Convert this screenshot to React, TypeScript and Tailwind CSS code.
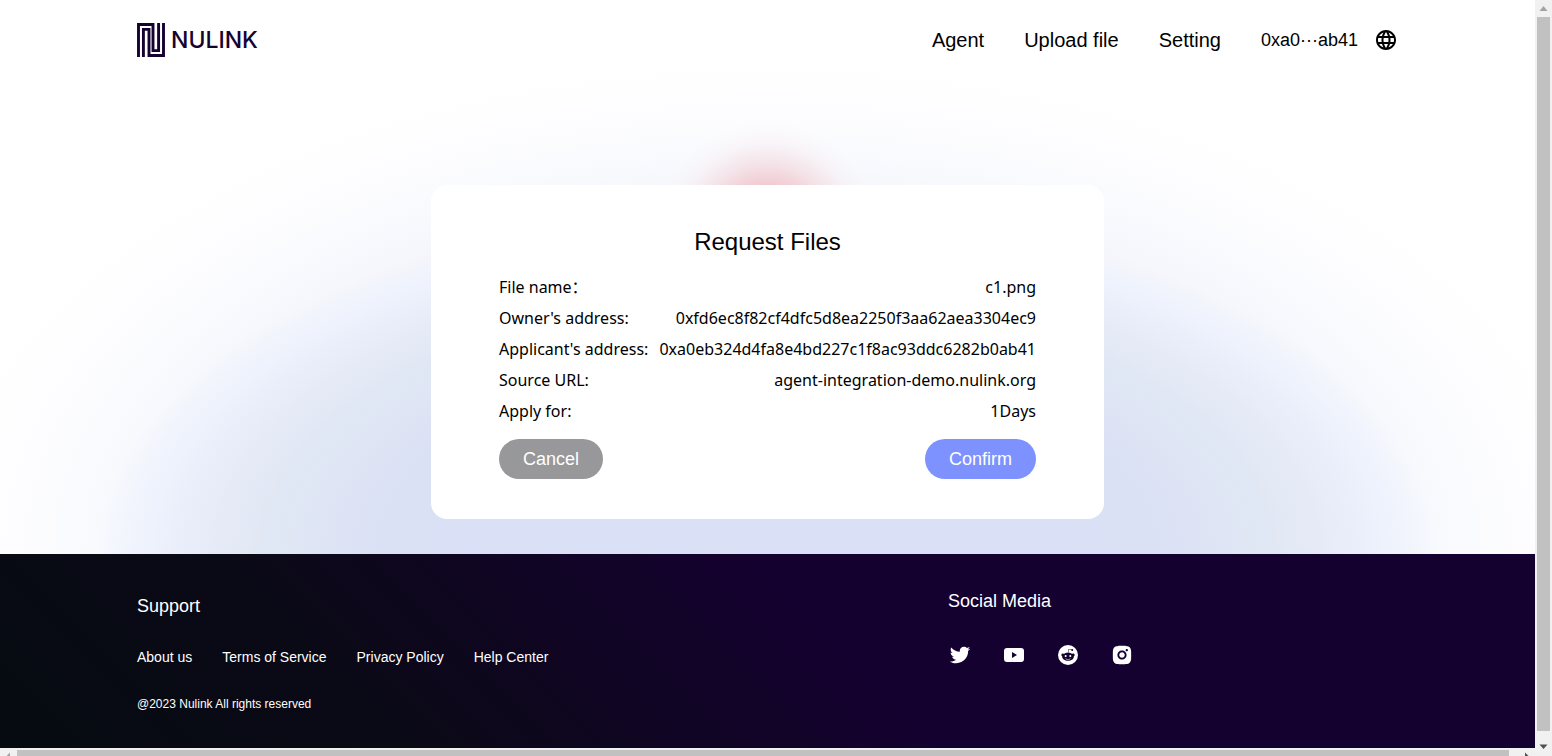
import React from 'react';
import { BsReddit } from 'react-icons/bs';
import { MdLanguage } from 'react-icons/md';
import { RiInstagramFill, RiTwitterFill } from 'react-icons/ri';

const rows = [
  ['File name：', 'c1.png'],
  ["Owner's address:", '0xfd6ec8f82cf4dfc5d8ea2250f3aa62aea3304ec9'],
  ["Applicant's address:", '0xa0eb324d4fa8e4bd227c1f8ac93ddc6282b0ab41'],
  ['Source URL:', 'agent-integration-demo.nulink.org'],
  ['Apply for:', '1Days'],
];

const supportLinks = ['About us', 'Terms of Service', 'Privacy Policy', 'Help Center'];

function LogoMark() {
  return (
    <svg width="28" height="34" viewBox="0 0 28 34" fill="none" stroke="#160230" strokeWidth="2.9" aria-hidden="true">
      <path d="M1.5 34V1.5H16V27.6H21.6V0" />
      <path d="M26.5 0V32.5H12V6.4H6.4V34" />
    </svg>
  );
}

function YoutubeIcon() {
  return (
    <svg width="24" height="24" viewBox="0 0 24 24" fill="currentColor" aria-hidden="true">
      <path
        fillRule="evenodd"
        d="M5 5h14a3 3 0 0 1 3 3v8a3 3 0 0 1-3 3H5a3 3 0 0 1-3-3V8a3 3 0 0 1 3-3Zm5 4v6l5-3-5-3Z"
      />
    </svg>
  );
}

function Header() {
  return (
    <header className="mx-auto flex h-20 w-full max-w-[1261px] items-center justify-between">
      <a href="#" className="flex items-center gap-1.5 text-[#160230]">
        <LogoMark />
        <span className="font-['Inter',sans-serif] text-[23px] leading-8 font-medium">NULINK</span>
      </a>
      <nav className="flex items-center gap-10 text-xl text-black">
        <a href="#">Agent</a>
        <a href="#">Upload file</a>
        <a href="#">Setting</a>
        <div className="flex items-center gap-4 text-lg">
          <span>0xa0···ab41</span>
          <button type="button" aria-label="Language">
            <MdLanguage className="size-6" />
          </button>
        </div>
      </nav>
    </header>
  );
}

function RequestCard() {
  return (
    <section className="mx-auto mt-[105px] mb-[35px] w-full max-w-[673px] rounded-2xl bg-white px-[68px] py-10">
      <h1 className="text-center text-2xl leading-[34px] text-black">Request Files</h1>
      <dl className="mt-[13px] font-['Noto_Sans','Noto_Sans_CJK_SC',sans-serif] text-base leading-[31px] text-black">
        {rows.map(([label, value]) => (
          <div key={label} className="flex h-[31px] justify-between whitespace-nowrap">
            <dt>{label}</dt>
            <dd>{value}</dd>
          </div>
        ))}
      </dl>
      <div className="mt-3 flex justify-between text-lg text-white">
        <button type="button" className="h-10 rounded-full bg-[#98989a] px-6">
          Cancel
        </button>
        <button type="button" className="h-10 rounded-full bg-[#7e92ff] px-6">
          Confirm
        </button>
      </div>
    </section>
  );
}

function Footer() {
  return (
    <footer className="bg-[linear-gradient(45deg,#050b10_0%,#0b0917_25%,#150130_55%)] pt-[33px] pb-9 text-white">
      <div className="mx-auto flex w-full max-w-[1261px] justify-between">
        <div className="pt-[5px]">
          <h2 className="text-lg leading-7">Support</h2>
          <nav className="mt-[27px] flex gap-[30px] text-sm leading-5">
            {supportLinks.map((link) => (
              <a key={link} href="#">
                {link}
              </a>
            ))}
          </nav>
          <p className="mt-[29px] text-xs leading-4">@2023 Nulink All rights reserved</p>
        </div>
        <div className="w-[450px]">
          <h2 className="text-lg leading-7">Social Media</h2>
          <div className="mt-7 flex gap-[30px]">
            <a href="#" aria-label="Twitter">
              <RiTwitterFill className="size-6" />
            </a>
            <a href="#" aria-label="YouTube">
              <YoutubeIcon />
            </a>
            <a href="#" aria-label="Reddit" className="flex size-6 items-center justify-center">
              <BsReddit className="size-5" />
            </a>
            <a href="#" aria-label="Instagram" className="flex size-6 items-center justify-center">
              <RiInstagramFill className="size-[22px]" />
            </a>
          </div>
        </div>
      </div>
    </footer>
  );
}

function VerticalScrollbar() {
  return (
    <div className="flex w-[17px] shrink-0 flex-col items-center bg-[#f1f1f1]" aria-hidden="true">
      <svg width="17" height="17" viewBox="0 0 17 17" className="shrink-0" fill="#a3a3a3">
        <path d="M8.5 6 12.5 11H4.5Z" />
      </svg>
      <div className="w-[13px] flex-1 bg-[#c1c1c1]" />
      <svg width="17" height="25" viewBox="0 0 17 25" className="shrink-0" fill="#505050">
        <path d="M4.5 13.5H12.5L8.5 18Z" />
      </svg>
    </div>
  );
}

function HorizontalScrollbar() {
  return (
    <div className="flex h-2 shrink-0 overflow-hidden bg-[#f1f1f1]" aria-hidden="true">
      <svg width="17" height="8" viewBox="0 0 17 8" className="shrink-0" fill="#a3a3a3">
        <path d="M6 8.5 10 4.5V8.5Z" />
      </svg>
      <div className="mt-0.5 flex-1 bg-[#c1c1c1]" />
      <svg width="26" height="8" viewBox="0 0 26 8" className="shrink-0" fill="#505050">
        <path d="M16 4.5 20 8.5H16Z" />
      </svg>
    </div>
  );
}

export default function App() {
  return (
    <div className="flex min-h-screen bg-white font-['Liberation_Sans',sans-serif]">
      <div className="flex min-w-0 flex-1 flex-col">
        <main className="flex-1 bg-[radial-gradient(circle_108px_at_50%_230px,rgba(238,172,184,0.9)_0%,rgba(238,180,188,0.65)_42%,rgba(238,188,194,0.35)_62%,rgba(240,200,205,0.1)_82%,rgba(255,255,255,0)_100%),radial-gradient(650px_338px_at_50%_100%,#dae0f5_0%,#dbe1f5_60%,#e1e8f4_78%,#e8ebf8_87%,#edf2fd_95%,rgba(240,244,253,0)_103%),radial-gradient(790px_465px_at_50%_100%,#f3f4fa_0%,#f5f6fb_77%,#f9fafe_86%,#fdfdff_95%,#ffffff_106%)]">
          <Header />
          <RequestCard />
        </main>
        <Footer />
        <HorizontalScrollbar />
      </div>
      <VerticalScrollbar />
    </div>
  );
}
